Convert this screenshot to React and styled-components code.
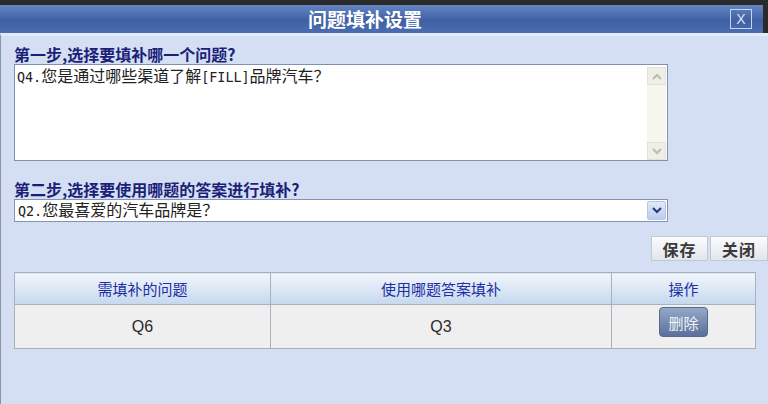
import React from 'react'
import styled, { createGlobalStyle } from 'styled-components'

const GlobalStyle = createGlobalStyle`
  html, body {
    margin: 0;
    padding: 0;
    background: #2b2b2b;
  }
  body {
    font-family: "Noto Sans CJK SC", "Liberation Sans", sans-serif;
  }
`

const Dialog = styled.div`
  width: 768px;
  height: 404px;
  display: flex;
  flex-direction: column;
  overflow: hidden;
`

const TitleWrap = styled.div`
  background: #2b2b2b;
  padding: 5px 5px 0 0;
`

const TitleBar = styled.div`
  height: 28px;
  display: flex;
  align-items: center;
  background: linear-gradient(#6586c3, #3f60a3 55%, #4a6db3);
`

const Title = styled.h1`
  flex: 1;
  margin: 0;
  text-align: center;
  color: #fff;
  font-size: 19px;
  font-weight: 700;
  line-height: 28px;
`

const CloseBtn = styled.button`
  width: 22px;
  height: 20px;
  margin-right: 11px;
  padding: 0;
  border: 1px solid #c6d3ec;
  background: transparent;
  color: #d8e2f4;
  font-family: "Liberation Sans", sans-serif;
  font-size: 14px;
  line-height: 18px;
`

const Body = styled.div`
  flex: 1;
  background: #d4dff3;
  border-top: 3px solid #e3eaf8;
  border-left: 1px solid #8a93a5;
  padding: 10px 0 0 13px;
  display: flex;
  flex-direction: column;
`

const StepLabel = styled.div`
  height: 18px;
  font-size: 16px;
  font-weight: 700;
  line-height: 17px;
  color: #1b1f78;
  margin-top: ${p => p.$gap || 0}px;
`

const Ascii = styled.span`
  font-family: "DejaVu Sans Mono", monospace;
  font-size: 13.4px;
`

const TextBox = styled.div`
  width: 654px;
  height: 97px;
  box-sizing: border-box;
  display: flex;
  border: 1px solid #8190b2;
  background: #fff;
`

const TextContent = styled.div`
  flex: 1;
  padding: 1px 2px;
  font-size: 16px;
  line-height: 18px;
  color: #222;
`

const ScrollTrack = styled.div`
  width: 19px;
  margin: 2px 1px 0 0;
  display: flex;
  flex-direction: column;
  justify-content: space-between;
  background: #f6f6ef;
`

const ScrollBtn = styled.div`
  height: 18px;
  display: flex;
  align-items: center;
  justify-content: center;
  background: #efefe6;
  border: 1px solid #e2e2d8;
  box-sizing: border-box;
`

const SelectBox = styled.div`
  width: 654px;
  height: 23px;
  box-sizing: border-box;
  display: flex;
  align-items: center;
  border: 1px solid #8592b0;
  background: #fff;
`

const SelectText = styled.div`
  flex: 1;
  padding-left: 3px;
  font-size: 16px;
  line-height: 21px;
  color: #222;
`

const SelectArrow = styled.div`
  width: 19px;
  height: 19px;
  margin-right: 1px;
  display: flex;
  align-items: center;
  justify-content: center;
  box-sizing: border-box;
  border: 1px solid #b6c5e3;
  border-radius: 2px;
  background: linear-gradient(#e1e9f9, #bccdee);
`

const ButtonRow = styled.div`
  display: flex;
  justify-content: flex-end;
  gap: 2px;
  margin-top: 14px;
`

const ToolButton = styled.button`
  width: ${p => p.$w}px;
  height: 25px;
  padding: 0;
  border: 1px solid #c3c8d1;
  background: linear-gradient(#fbfcfd, #e1e5ec);
  color: #3a3a3a;
  font-family: "Noto Sans CJK SC", sans-serif;
  font-size: 16px;
  font-weight: 700;
  letter-spacing: 1px;
`

const Table = styled.table`
  width: 742px;
  margin-top: 11px;
  border-collapse: collapse;
  table-layout: fixed;
  border: 1px solid #a9b1bd;

  & th, & td {
    border: 1px solid #a9b1bd;
    text-align: center;
    padding: 0;
  }
`

const HeadCell = styled.th`
  height: 31px;
  background: linear-gradient(#f1f6fc, #c6d8ed);
  color: #1c2ea8;
  font-size: 15px;
  font-weight: 400;
`

const Cell = styled.td`
  height: 43px;
  background: #efefef;
  color: #2a2a2a;
  font-family: "Liberation Sans", sans-serif;
  font-size: 16px;
`

const DeleteBtn = styled.button`
  width: 49px;
  height: 30px;
  margin-bottom: 9px;
  padding: 0;
  border: 1px solid #566a90;
  border-radius: 4px;
  background: linear-gradient(#94a8c9, #5b7099);
  color: #f2f5fa;
  font-family: "Noto Sans CJK SC", sans-serif;
  font-size: 15px;
`

const Chevron = ({ up, color }) => (
  <svg width="10" height="7" viewBox="0 0 10 7">
    <polyline
      points={up ? '1,6 5,2 9,6' : '1,1 5,5 9,1'}
      fill="none"
      stroke={color}
      strokeWidth="2"
    />
  </svg>
)

const App = () => {
  return (
    <Dialog>
      <GlobalStyle />
      <TitleWrap>
        <TitleBar>
          <Title>问题填补设置</Title>
          <CloseBtn>X</CloseBtn>
        </TitleBar>
      </TitleWrap>
      <Body>
        <StepLabel>第一步,选择要填补哪一个问题?</StepLabel>
        <TextBox>
          <TextContent>
            <Ascii>Q4.</Ascii>您是通过哪些渠道了解<Ascii>[FILL]</Ascii>品牌汽车？
          </TextContent>
          <ScrollTrack>
            <ScrollBtn><Chevron up color="#b9bcb2" /></ScrollBtn>
            <ScrollBtn><Chevron color="#b9bcb2" /></ScrollBtn>
          </ScrollTrack>
        </TextBox>
        <StepLabel $gap={20}>第二步,选择要使用哪题的答案进行填补?</StepLabel>
        <SelectBox>
          <SelectText>
            <Ascii>Q2.</Ascii>您最喜爱的汽车品牌是？
          </SelectText>
          <SelectArrow><Chevron color="#23367e" /></SelectArrow>
        </SelectBox>
        <ButtonRow>
          <ToolButton $w={57}>保存</ToolButton>
          <ToolButton $w={58}>关闭</ToolButton>
        </ButtonRow>
        <Table>
          <colgroup>
            <col style={{ width: 256 }} />
            <col style={{ width: 341 }} />
            <col style={{ width: 144 }} />
          </colgroup>
          <thead>
            <tr>
              <HeadCell>需填补的问题</HeadCell>
              <HeadCell>使用哪题答案填补</HeadCell>
              <HeadCell>操作</HeadCell>
            </tr>
          </thead>
          <tbody>
            <tr>
              <Cell>Q6</Cell>
              <Cell>Q3</Cell>
              <Cell><DeleteBtn>删除</DeleteBtn></Cell>
            </tr>
          </tbody>
        </Table>
      </Body>
    </Dialog>
  )
}

export default App
